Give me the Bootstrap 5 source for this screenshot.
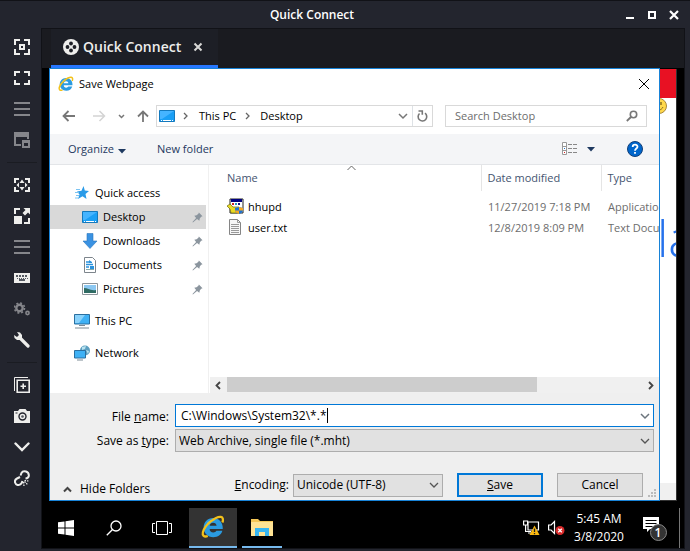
<!DOCTYPE html>
<html lang="en">
<head>
<meta charset="utf-8">
<meta name="viewport" content="width=device-width, initial-scale=1">
<title>Quick Connect</title>
<link href="https://cdn.jsdelivr.net/npm/bootstrap@5.3.0/dist/css/bootstrap.min.css" rel="stylesheet">
<style>
body{font-family:"Open Sans","Noto Sans",sans-serif;font-size:12px;line-height:16px;background:#23252e;color:#000}
button{border:0;background:none;padding:0;color:inherit}
svg{display:block;flex:none}
a{color:inherit;text-decoration:none}
.gs{margin-left:12px}
.titlebar{height:28px;border-top:1px solid #111217;color:#fff;font-weight:600;padding:0 10px 0 0}
.winbtns{gap:10px}
.rail{width:41px;padding-top:4px}
.rail button{height:31px;width:41px;padding:0 0 1px 3px;color:#eeeeec}
.rail button:disabled{color:#85868b}
.rail hr{margin:6px 4px 7px 7px;border-color:#1a1c22;opacity:1}
.stage{border:1px solid #111217;margin:0 5px 2px 0}
.tabstrip{background:#1a1b20;height:39px;padding-left:9px}
.tab-on{background:#1d1f26;border-bottom:3px solid #2777ff;color:#eeeeec;font-size:14px;font-weight:600;padding:0 14px 0 12px;width:167px}
.desk{background:#000}
.backwin{position:absolute;top:1px;left:20px;right:7px;bottom:0;background:#fff;border-right:1px solid #333;border-bottom:1px solid #333;overflow:hidden}
.backwin .redbar{height:29px;background:#e81123}
.backwin .smile{position:absolute;right:8px;top:29px}
.backwin .bigtext{position:absolute;left:595px;top:139px;font-size:50px;font-weight:300;line-height:60px;color:#2672ec}
.backwin .foot{height:17px;background:#f0f0f0}
.dialog{position:relative;margin:0 24px 0 7px;border:1px solid #1883d7;background:#fff;font-size:11px}
.dlg-title{height:32px;padding:0 9px 3px 8px}
.dlg-title span{margin-left:5px}
.dlg-nav{padding:4px 12px 7px 12px}
.address{margin-left:7px;padding-left:2px}
.mute{color:#777}
.box{border:1px solid #d9d9d9;height:22px;background:#fff}
.search-box{width:202px}
.search-box input{border:0;outline:0;width:100%;padding:0 0 0 9px;background:none}
.search-box input::placeholder{color:#6d6d6d;opacity:1}
.tools{height:31px;background:#f4f5f7;border-bottom:1px solid #e3e5e8;padding:0 16px 0 18px;color:#1e3960}
.tools .newf{margin-left:31px}
.side{width:159px;border-right:1px solid #f0f0f0;padding-top:16px}
.side a{height:24px;padding:0 3px 0 32px;margin-right:2px;gap:5px}
.side a.top{padding-left:24px}
.side a.on{background:#d9d9d9}
.files{table-layout:fixed;width:100%}
.files th{height:26px;font-weight:400;color:#44546f;padding:0 0 0 6px;border-left:1px solid #e5e5e5}
.files th:first-child{border-left:0;padding-left:18px}
.files td{height:21px;padding:0 0 0 7px;color:#6d6d6d;white-space:nowrap;overflow:hidden}
.files td:first-child{padding-left:18px;color:#000}
.files .gaprow td{height:5px}
.c-name{width:272px}.c-date{width:120px}
.sortmark{position:absolute;left:138px;top:0}
.hbar{height:16px;background:#f0f0f0;margin-left:1px;padding-right:4px}
.hbar .thumb{width:310px;height:15px;background:#cdcdcd}
.form-zone{background:#efefef;padding:11px 5px 3px 0;font-size:12px}
.lab{width:125px;padding-right:6px;text-align:right}
.combo{height:23px;border:1px solid #0078d7;background:#fff;padding-right:3px;margin-bottom:2px}
.combo input{border:0;outline:0;padding:0 0 0 5px;width:100%;background:linear-gradient(#000,#000) 151px center/1px 15px no-repeat;caret-color:transparent}
.pick{--bs-form-select-bg-img:url("data:image/svg+xml,%3Csvg xmlns='http://www.w3.org/2000/svg' viewBox='0 0 10 10'%3E%3Cpath fill='none' stroke='%23555' stroke-width='1.3' d='M1 3l4 4 4-4'/%3E%3C/svg%3E");height:23px;border:1px solid #adadad;border-radius:0;background-color:#e1e1e1;background-size:10px 10px;background-position:right 3px center;padding:0 18px 0 3px;font-size:12px;line-height:16px;color:#000}
.enc{width:150px}
.dlgbtn{width:86px;height:24px;border:1px solid #adadad;background:#e1e1e1;margin-left:14px}
.dlgbtn.go{border:2px solid #0078d7}
.grip{position:absolute;right:2px;bottom:2px}
.lastrow{padding:21px 11px 0 13px}
.taskbar{height:47px;padding-top:7px;color:#fff}
.taskbar .tb{width:48px;height:40px}
.taskbar .tb.act{background:#333;border-bottom:2px solid #76b9ed;margin-left:3px}
.taskbar .tb.run{width:40px;border-bottom:2px solid #76b9ed;margin-left:5px}
.clock{width:60px;line-height:18px;text-align:center}
.showdesk{width:5px;border-left:1px solid #777}
</style>
<script src="https://cdn.jsdelivr.net/npm/bootstrap@5.3.0/dist/js/bootstrap.bundle.min.js"></script>
</head>
<body class="d-flex flex-column min-vh-100">
<svg class="d-none">
  <symbol id="ie" viewBox="0 0 32 32"><path fill="#2b9be0" d="M16 4C9 4 3.500 9.500 3.500 16.500S8.500 29.500 16.500 29.500c6 0 10.500-3 12-8.500h-8c-.8 1.600-2.200 2.300-4 2.300-3 0-5-1.900-5-4.800h17.500C29.500 10 24 4 16 4zm-4.400 10.300c.4-2.600 2-4 4.600-4s4.300 1.400 4.600 4z"/><path fill="#7fd3f7" d="M7 13c2-5 7-7.500 12-6-5-.3-8 1.500-10 5z"/><path fill="none" stroke="#f3c11b" stroke-width="3" d="M28.500 10c1.500-4 .8-7-2-7.500C20 1.500 5 13 2.500 23c-1 4 1.500 7 6.500 5"/></symbol>
  <symbol id="desk" viewBox="0 0 16 16"><path fill="#1a9ff5" stroke="#1479bd" d="M.5 2.500h15v11H.5z"/><path fill="#45b4ff" d="M1 3h14L3 11H1z"/><path stroke="#fff" stroke-dasharray="1 1 8 1 1 1" d="M2 12.500h12"/></symbol>
  <symbol id="pin" viewBox="0 0 12 12"><path fill="#8b959e" d="M7.500.5l4 4-1.500.6L8.500 7 8 9.500 5.500 7.500 1 11.500.5 11l4-4.500L2.500 4 5 3.600 7 2z"/></symbol>
  <symbol id="lines" viewBox="0 0 16 14"><path fill="currentColor" d="M0 0h16v2H0zM0 6h16v2H0zM0 12h16v2H0z"/></symbol>
  <symbol id="chev" viewBox="0 0 10 10"><path fill="none" stroke="currentColor" stroke-width="1.500" d="M1 3l4 4 4-4"/></symbol>
</svg>

<header class="titlebar d-flex align-items-center">
  <div class="flex-grow-1 text-center">Quick Connect</div>
  <div class="winbtns d-flex">
    <button aria-label="Minimize"><svg width="12" height="12"><path fill="#fff" d="M2 8h8v2H2z"/></svg></button>
    <button aria-label="Maximize"><svg width="12" height="12"><path fill="none" stroke="#fff" stroke-width="2" d="M3 3h6v6H3z"/></svg></button>
    <button aria-label="Close"><svg width="12" height="12"><path stroke="#fff" stroke-width="2.200" d="M2 2l8 8M10 2l-8 8"/></svg></button>
  </div>
</header>

<div class="d-flex flex-grow-1">
  <nav class="rail flex-shrink-0 d-flex flex-column" aria-label="Session tools">
    <button class="d-flex align-items-center justify-content-center" aria-label="Fit window"><svg width="16" height="16" fill="none" stroke="currentColor" stroke-width="2"><path d="M6 1H1v5M10 1h5v5M1 10v5h5M15 10v5h-5"/><path d="M6 6h4v4H6z"/></svg></button>
    <button class="d-flex align-items-center justify-content-center" aria-label="Fullscreen"><svg width="16" height="14" fill="none" stroke="currentColor" stroke-width="2"><path d="M6 1H1v4M10 1h5v4M1 9v4h5M15 9v4h-5"/></svg></button>
    <button class="d-flex align-items-center justify-content-center" disabled aria-label="Monitors"><svg width="16" height="14"><use href="#lines"/></svg></button>
    <button class="d-flex align-items-center justify-content-center" disabled aria-label="Dynamic resolution"><svg width="16" height="16"><path fill="currentColor" d="M0 0h15v7h-2V5H2v7h5v2H0zM8 8h8v8H8zm2 3v3h4v-3z" fill-rule="evenodd"/></svg></button>
    <hr>
    <button class="d-flex align-items-center justify-content-center" aria-label="Scaled mode"><svg width="16" height="14" fill="none" stroke="currentColor" stroke-width="2"><path d="M5 1H1v4M11 1h4v4M1 9v4h4M15 9v4h-4"/><path fill="currentColor" stroke="none" d="M8 1.500L10.500 5h-5zM8 12.500L5.500 9h5zM2.500 7L5 4.500v5zM13.500 7L11 4.500v5z"/></svg></button>
    <button class="d-flex align-items-center justify-content-center" aria-label="Scale"><svg width="16" height="16" fill="none" stroke="currentColor" stroke-width="2"><path d="M6 1H1v5M15 10v5h-5"/><path fill="currentColor" stroke="none" d="M0 8h8v8H0zM9.500 0H16v6.500l-2-2L11 7.500 8.500 5l3-3z"/></svg></button>
    <button class="d-flex align-items-center justify-content-center" disabled aria-label="Menu"><svg width="16" height="14"><use href="#lines"/></svg></button>
    <button class="d-flex align-items-center justify-content-center" aria-label="Keyboard"><svg width="16" height="10"><path fill="currentColor" d="M0 0h16v10H0z"/><path stroke="#555a62" stroke-width="2" stroke-dasharray="2 1" d="M2 3h12"/><path stroke="#555a62" stroke-dasharray="1 1" d="M3 5.500h11"/><path stroke="#555a62" stroke-width="2" d="M5 7h6"/></svg></button>
    <button class="d-flex align-items-center justify-content-center" disabled aria-label="Preferences"><svg width="16" height="14" fill="none" stroke="currentColor"><circle cx="5.500" cy="6" r="3.200" stroke-width="2.400"/><circle cx="5.500" cy="6" r="5" stroke-width="1.600" stroke-dasharray="2 1.930"/><circle cx="13.500" cy="11" r="1.600" stroke-width="1.600"/></svg></button>
    <button class="d-flex align-items-center justify-content-center" aria-label="Tools"><svg width="16" height="16"><path fill="none" stroke="currentColor" stroke-width="3.200" stroke-linecap="round" d="M6 6l8 8"/><path fill="currentColor" d="M3 0l3 .5 2 2.500v3L6 8H3L.5 6 0 3l3 2 2-2z"/></svg></button>
    <hr>
    <button class="d-flex align-items-center justify-content-center" aria-label="Duplicate"><svg width="16" height="16" fill="none" stroke="currentColor"><path d="M.5 14V.5H14"/><path stroke-width="1.600" d="M3.200 3.200h12v12h-12z"/><path stroke-width="1.600" d="M9.200 6.500v5.500M6.500 9.200H12"/></svg></button>
    <button class="d-flex align-items-center justify-content-center" aria-label="Screenshot"><svg width="16" height="14"><path fill="currentColor" d="M0 2h4l1.500-2h6L13 2h3v12H0z"/><circle cx="8.500" cy="7.500" r="3.500" fill="none" stroke="#23252e" stroke-width="1.400"/><circle cx="8.500" cy="7.500" r="1.300" fill="#55585f"/><path fill="#23252e" d="M1.500 3.500h2v1h-2z"/></svg></button>
    <button class="d-flex align-items-center justify-content-center" aria-label="Minimize window"><svg width="16" height="10"><path fill="none" stroke="currentColor" stroke-width="2.400" stroke-linecap="round" d="M1.500 1.500L8 8l6.500-6.500"/></svg></button>
    <button class="d-flex align-items-center justify-content-center" aria-label="Disconnect"><svg width="16" height="16" fill="none" stroke="currentColor" stroke-width="2"><path d="M6.500 5.500l1-2.500C8.500 1 10 .8 12 1.500s3 2.500 2.800 4.500c-.3 1.500-1.300 2.300-3.300 2.500M6 7L3 8.500C1 9.500.6 11 1.200 12.800s2.300 2.500 4 2.100C6.800 14.500 8 13 8.500 11"/><path stroke-width="1.200" stroke-dasharray="1.500 1" d="M10.500 10.500l4 .5M10.500 11.500l3.500 3.500M9.500 12l.5 4"/></svg></button>
  </nav>

  <main class="stage flex-grow-1 d-flex flex-column">
    <div class="tabstrip d-flex">
      <div class="tab-on d-flex align-items-center">
        <svg width="16" height="16" class="me-1"><circle cx="8" cy="8" r="8" fill="#eeeeec"/><g fill="#1d1f26"><circle cx="8" cy="4.500" r="1.900"/><circle cx="8" cy="11.500" r="1.900"/><circle cx="4.500" cy="8" r="1.900"/><circle cx="11.500" cy="8" r="1.900"/></g></svg>
        <span class="flex-grow-1">Quick Connect</span>
        <button aria-label="Close tab"><svg width="12" height="12"><path stroke="#d8d8d6" stroke-width="2" d="M2.500 2.500l7 7M9.500 2.500l-7 7"/></svg></button>
      </div>
    </div>

    <div class="desk flex-grow-1 d-flex flex-column">
      <div class="position-relative flex-grow-1 d-flex flex-column">
        <div class="backwin d-flex flex-column">
          <div class="redbar"></div>
          <svg class="smile" width="18" height="16"><circle cx="9" cy="8" r="7.500" fill="#ffd84a" stroke="#a8873a"/><path stroke="#8a6d1c" stroke-width="1.500" d="M7 4v3M11 4v3"/><path fill="none" stroke="#8a6d1c" d="M5 9c2 4 6 4 8 0"/></svg>
          <div class="bigtext">la</div>
          <div class="foot mt-auto"></div>
        </div>

        <section class="dialog flex-grow-1 d-flex flex-column" role="dialog" aria-label="Save Webpage">
          <div class="dlg-title d-flex align-items-center">
            <svg width="16" height="16"><use href="#ie"/></svg>
            <span class="flex-grow-1">Save Webpage</span>
            <button aria-label="Close"><svg width="12" height="12"><path stroke="#000" d="M1 1l10 10M11 1L1 11"/></svg></button>
          </div>

          <div class="dlg-nav d-flex align-items-center">
            <button aria-label="Back"><svg width="14" height="12" fill="none" stroke="#777" stroke-width="1.800"><path d="M13 6H2M6.500 1L1.500 6l5 5"/></svg></button>
            <button class="ms-3" aria-label="Forward" disabled><svg width="14" height="12" fill="none" stroke="#d4d4d4" stroke-width="1.500"><path d="M1 6h11M7.500 1l5 5-5 5"/></svg></button>
            <button class="gs" aria-label="Recent"><svg width="7" height="7"><path fill="none" stroke="#777" stroke-width="1.500" d="M1 2l2.500 2.500L6 2"/></svg></button>
            <button class="gs" aria-label="Up"><svg width="12" height="12" fill="none" stroke="#777" stroke-width="1.800"><path d="M6 12V2M1 6.500l5-5 5 5"/></svg></button>
            <div class="box address flex-grow-1 d-flex align-items-center">
              <svg width="16" height="16" class="me-1"><use href="#desk"/></svg>
              <svg width="8" height="10" class="ms-1"><path fill="none" stroke="#666" stroke-width="1.300" d="M1 2l3 3-3 3"/></svg>
              <a href="#" class="ms-1 ps-1">This PC</a>
              <svg width="8" height="10" class="ms-2"><path fill="none" stroke="#666" stroke-width="1.300" d="M2 2l3 3-3 3"/></svg>
              <a href="#" class="ms-2 flex-grow-1">Desktop</a>
              <button class="me-1 mute" aria-label="Previous locations"><svg width="10" height="10"><use href="#chev"/></svg></button>
              <button class="h-100 border-start px-1" aria-label="Refresh"><svg width="11" height="12" fill="none" stroke="#777" stroke-width="1.600"><path d="M2.500 3.500a4.300 4.300 0 1 0 5.500-.3M1.500 1h3.800v3.800"/></svg></button>
            </div>
            <div class="box search-box d-flex align-items-center gs pe-2">
              <input type="text" placeholder="Search Desktop" aria-label="Search Desktop">
              <svg width="12" height="12"><circle cx="7.500" cy="4.500" r="3.200" fill="none" stroke="#777" stroke-width="1.600"/><path stroke="#777" stroke-width="1.800" d="M5 7L.8 11"/></svg>
            </div>
          </div>

          <div class="tools d-flex align-items-center">
            <button class="d-flex align-items-center">Organize <svg width="8" height="5" class="ms-1 mt-1"><path fill="#1e3960" d="M0 0h8L4 4.500z"/></svg></button>
            <button class="newf flex-grow-1 text-start">New folder</button>
            <button class="d-flex align-items-center me-4" aria-label="Change view"><svg width="17" height="14"><path fill="#fff" stroke="#999" d="M.5.5h4v12h-4zM.5 4.500h4M.5 8.500h4"/><path stroke="#888" stroke-dasharray="4 1" d="M6 2.500h10M6 6.500h10M6 10.500h10"/><path fill="#d22" d="M2 10h1v1H2z"/><path fill="#27c" d="M2 6h1v1H2z"/></svg><svg width="8" height="5" class="ms-2"><path fill="#1e3960" d="M0 0h8L4 4.500z"/></svg></button>
            <button class="ms-2" aria-label="Help"><svg width="16" height="16"><circle cx="8" cy="8" r="7.500" fill="#0066cc" stroke="#123f78"/><path fill="none" stroke="#fff" stroke-width="1.800" d="M5.700 6c0-3 4.800-3 4.800-.3C10.500 7.500 8 7.500 8 9.800M8 11v1.800"/></svg></button>
          </div>

          <div class="d-flex flex-grow-1">
            <nav class="side flex-shrink-0 d-flex flex-column" aria-label="Folders">
              <a href="#" class="top d-flex align-items-center"><svg width="16" height="16"><path fill="#2a9be8" d="M9.500 1l1.300 4.500L15 6l-3.500 3 1 5-4-2.800L4 14l1.500-4.500L3 6.500l4.500-.8z"/><path stroke="#7cc4f2" d="M2 4.500h4M1 7.500h4M2 10.500h3M1 13h3"/></svg>Quick access</a>
              <a href="#" class="on d-flex align-items-center"><svg width="16" height="16"><use href="#desk"/></svg><span class="flex-grow-1">Desktop</span><svg width="11" height="11"><use href="#pin"/></svg></a>
              <a href="#" class="d-flex align-items-center"><svg width="16" height="16"><path fill="#3a92e2" stroke="#2b77bd" stroke-width=".6" d="M5 .5h6V8h4l-7 7.500L1 8h4z"/></svg><span class="flex-grow-1">Downloads</span><svg width="11" height="11"><use href="#pin"/></svg></a>
              <a href="#" class="d-flex align-items-center"><svg width="16" height="16"><path fill="#fff" stroke="#7d858c" d="M2.500.5h8l3 3v12h-11z"/><path stroke="#2a92dd" stroke-width="1.500" d="M4 5h3M4 7.500h7M4 10h3"/><path fill="#2a92dd" d="M7 3l3 2v1H7zM8 9h4v3H8z"/><path stroke="#8aa" d="M4 12.500h8"/></svg><span class="flex-grow-1">Documents</span><svg width="11" height="11"><use href="#pin"/></svg></a>
              <a href="#" class="d-flex align-items-center"><svg width="16" height="16"><path fill="#fff" stroke="#8d959b" d="M.5 2.500h15v11H.5z"/><path fill="#8cc8f2" d="M2 4h12v8H2z"/><path fill="#2f6b63" d="M2 7c4 0 6 3 12 2v3H2z"/></svg><span class="flex-grow-1">Pictures</span><svg width="11" height="11"><use href="#pin"/></svg></a>
              <a href="#" class="top d-flex align-items-center mt-2"><svg width="16" height="16"><path fill="#3fb1f5" stroke="#2b6f9f" d="M.5 1.500h15v9.500H.5z"/><path fill="#8ad2fb" d="M1 2h10l-6 8H1z"/><path stroke="#7d8b95" d="M5 12.500h6M1 15h14"/></svg>This PC</a>
              <a href="#" class="top d-flex align-items-center mt-2"><svg width="16" height="16"><circle cx="11" cy="5.500" r="5" fill="#5c9fc0"/><path fill="#b9e2ef" d="M8 2l4-1-1 3-3 1zM12 5l3 1-1 3z"/><path fill="#3fb1f5" stroke="#2b6f9f" d="M.5 5.500h11V13H.5z"/><path stroke="#7d8b95" d="M3 15h6"/></svg>Network</a>
            </nav>

            <div class="flex-grow-1 d-flex flex-column position-relative overflow-hidden">
              <svg class="sortmark" width="9" height="6"><path fill="none" stroke="#666" d="M.5 5l4-4 4 4"/></svg>
              <table class="files">
                <colgroup><col class="c-name"><col class="c-date"><col></colgroup>
                <thead><tr><th scope="col">Name</th><th scope="col">Date modified</th><th scope="col">Type</th></tr></thead>
                <tbody>
                  <tr class="gaprow"><td colspan="3"></td></tr>
                  <tr><td><div class="d-flex align-items-center"><svg width="17" height="17" class="me-1"><path fill="#fff" stroke="#222" d="M4 1h12v14H3V1z"/><path fill="#000080" d="M4 1h11v3H4z"/><path fill="#eadb22" stroke="#6b6414" stroke-width=".7" d="M0 8l3-2 3 3h6l2 2-2 4H4l-1-4z"/><path fill="#c22" d="M5 5h2v2H5z"/><path fill="#29b" d="M8 5h2v2H8z"/><path fill="#118" d="M11 5h2v2h-2z"/><path fill="#1b73d3" d="M12 9l4 1c0 4-1 5-4 6-3-1-4-2-4-6z"/><path fill="#f8a821" d="M12 9l4 1v2.500h-4zM8 12.500h4V16c-2-.8-3.500-1.500-4-3.500z"/></svg>hhupd</div></td><td>11/27/2019 7:18 PM</td><td>Application</td></tr>
                  <tr><td><div class="d-flex align-items-center"><svg width="17" height="17" class="me-1"><path fill="#f6f6f6" stroke="#858585" d="M2.500.5h8l3 3v12h-11z"/><path fill="none" stroke="#999" d="M10.500.5v3h3M4 5.500h8M4 7.500h8M4 9.500h8M4 11.500h8M4 13.500h8"/></svg>user.txt</div></td><td>12/8/2019 8:09 PM</td><td>Text Document</td></tr>
                </tbody>
              </table>
              <div class="hbar d-flex mt-auto">
                <button class="px-1" aria-label="Scroll left"><svg width="9" height="9"><path fill="none" stroke="#444" stroke-width="1.800" d="M6 1L2.500 4.500 6 8"/></svg></button>
                <div class="thumb"></div>
                <button class="ms-auto" aria-label="Scroll right"><svg width="9" height="9"><path fill="none" stroke="#444" stroke-width="1.800" d="M3 1l3.500 3.500L3 8"/></svg></button>
              </div>
            </div>
          </div>

          <div class="form-zone">
            <div class="d-flex align-items-center">
              <label class="lab flex-shrink-0" for="fname">File <u>n</u>ame:</label>
              <div class="combo flex-grow-1 d-flex align-items-center">
                <input id="fname" type="text" value="C:\Windows\System32\*.*">
                <button aria-label="Recent names" class="text-secondary"><svg width="10" height="10"><use href="#chev"/></svg></button>
              </div>
            </div>
            <div class="d-flex align-items-center">
              <label class="lab flex-shrink-0" for="ftype">Save as <u>t</u>ype:</label>
              <select id="ftype" class="form-select pick flex-grow-1"><option>Web Archive, single file (*.mht)</option></select>
            </div>
            <div class="lastrow d-flex align-items-center">
              <button class="d-flex align-items-center align-self-end"><svg width="9" height="7" class="me-2"><path fill="none" stroke="#444" stroke-width="2" d="M1 5.500L4.500 2 8 5.500"/></svg>Hide Folders</button>
              <label class="ms-auto me-1" for="enc"><u>E</u>ncoding:</label>
              <select id="enc" class="form-select pick enc"><option>Unicode (UTF-8)</option></select>
              <button class="dlgbtn go"><u>S</u>ave</button>
              <button class="dlgbtn">Cancel</button>
            </div>
          </div>
          <svg class="grip" width="9" height="9"><path fill="#bbb" d="M6 0h2v2H6zM3 3h2v2H3zM6 3h2v2H6zM0 6h2v2H0zM3 6h2v2H3zM6 6h2v2H6z"/></svg>
        </section>
      </div>

      <footer class="taskbar d-flex">
        <button class="tb d-flex align-items-center justify-content-center" aria-label="Start"><svg width="16" height="16"><path fill="#fff" d="M0 2.300l6.500-.9v6.100H0zM7.500 1.200L16 0v7.500H7.500zM0 8.500h6.500v6.100L0 13.700zM7.500 8.500H16V16l-8.500-1.200z"/></svg></button>
        <button class="tb d-flex align-items-center justify-content-center" aria-label="Search"><svg width="16" height="16" fill="none" stroke="#fff" stroke-width="1.300"><circle cx="10" cy="6" r="5"/><path d="M6.500 9.500L.8 15.300"/></svg></button>
        <button class="tb d-flex align-items-center justify-content-center" aria-label="Task view"><svg width="20" height="14" fill="none" stroke="#fff"><path d="M4.500.5h11v13h-11zM3 2.500H.5v9H3M17 2.500h2.500v9H17"/></svg></button>
        <button class="tb act d-flex align-items-center justify-content-center" aria-label="Internet Explorer"><svg width="24" height="24"><use href="#ie"/></svg></button>
        <button class="tb run d-flex align-items-center justify-content-center" aria-label="File Explorer"><svg width="22" height="19"><path fill="#f5c757" d="M0 1h7l2 2h13v3H0z"/><path fill="#ffe394" d="M0 4h22v14H0z"/><path fill="#38b6f1" d="M4 10h14v8h-4v-4H8v4H4z"/></svg></button>
        <div class="ms-auto d-flex align-items-center">
          <svg width="17" height="16"><path fill="none" stroke="#fff" stroke-width="1.200" d="M5 2h10.500v8H5zM.6 1h4v4h-4zM2.600 5v6.500H8M5 13h4"/><path fill="#fbb911" d="M11.500 5.500L16.500 15h-10z"/><path stroke="#222" stroke-width="1.300" d="M11.500 8.500v3.500M11.500 13v1.200"/></svg>
          <svg width="17" height="16" class="ms-2"><path fill="none" stroke="#fff" stroke-width="1.200" d="M.6 5h2.500L6.500 1.500v12L3.100 10H.6z"/><circle cx="12" cy="10.500" r="4.500" fill="#d92b2b"/><path stroke="#fff" stroke-width="1.300" d="M10.200 8.700l3.600 3.600M13.800 8.700l-3.600 3.600"/></svg>
          <div class="clock ms-1">5:45 AM<br>3/8/2020</div>
          <button class="gs" aria-label="Notifications, 1 new"><svg width="26" height="26"><path fill="#fff" d="M2 2h16v12H9l-3 3v-3H2z"/><path stroke="#000" d="M4.500 5.500h11M4.500 8.500h11M4.500 11.500h7"/><circle cx="17.500" cy="17.500" r="8" fill="#333" stroke="#888"/><text x="17" y="22" text-anchor="middle" fill="#fff" font-size="12" font-weight="600">1</text></svg></button>
          <button class="showdesk h-100 gs" aria-label="Show desktop"></button>
        </div>
      </footer>
    </div>
  </main>
</div>
</body>
</html>
